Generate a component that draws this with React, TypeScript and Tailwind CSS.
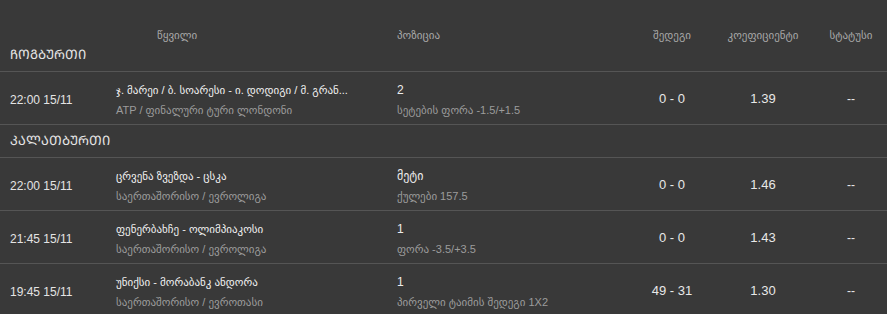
import React from "react";

type Row = {
  time: string;
  title: string;
  sub: string;
  pos: string;
  posSub: string;
  score: string;
  coef: string;
  status: string;
};

const tennis: Row[] = [
  {
    time: "22:00 15/11",
    title: "ჯ. მარეი / ბ. სოარესი - ი. დოდიგი / მ. გრან...",
    sub: "ATP / ფინალური ტური ლონდონი",
    pos: "2",
    posSub: "სეტების ფორა -1.5/+1.5",
    score: "0 - 0",
    coef: "1.39",
    status: "--",
  },
];

const basket: Row[] = [
  {
    time: "22:00 15/11",
    title: "ცრვენა ზვეზდა - ცსკა",
    sub: "საერთაშორისო / ევროლიგა",
    pos: "მეტი",
    posSub: "ქულები 157.5",
    score: "0 - 0",
    coef: "1.46",
    status: "--",
  },
  {
    time: "21:45 15/11",
    title: "ფენერბახჩე - ოლიმპიაკოსი",
    sub: "საერთაშორისო / ევროლიგა",
    pos: "1",
    posSub: "ფორა -3.5/+3.5",
    score: "0 - 0",
    coef: "1.43",
    status: "--",
  },
  {
    time: "19:45 15/11",
    title: "უნიქსი - მორაბანკ ანდორა",
    sub: "საერთაშორისო / ევროთასი",
    pos: "1",
    posSub: "პირველი ტაიმის შედეგი 1X2",
    score: "49 - 31",
    coef: "1.30",
    status: "--",
  },
];

const grid = "grid grid-cols-[116px_281px_1fr_90px_92px_78px]";

function Section({ title }: { title: string }) {
  return (
    <div className="h-[33px] flex items-center pl-[10px] border-b border-[#555555] text-[13px] text-[#e6e6e6]">
      {title}
    </div>
  );
}

function RowView({ r }: { r: Row }) {
  return (
    <div className={`${grid} h-[53px] border-b border-[#555555]`}>
      <div className="flex items-center pl-[10px] pt-[4px] text-[12px] text-[#e4e4e4]">{r.time}</div>
      <div className="flex flex-col pt-[10px] min-w-0">
        <div className="whitespace-nowrap text-[11px] leading-[16px] text-[#f0f0f0]">{r.title}</div>
        <div className="whitespace-nowrap text-[11px] leading-[16px] mt-[4px] text-[#9c9c9c]">{r.sub}</div>
      </div>
      <div className="flex flex-col pt-[10px] min-w-0">
        <div className="whitespace-nowrap text-[12px] leading-[16px] text-[#ececec]">{r.pos}</div>
        <div className="whitespace-nowrap text-[11px] leading-[16px] mt-[4px] text-[#9c9c9c]">{r.posSub}</div>
      </div>
      <div className="flex items-center justify-center pt-[1px] text-[13px] text-[#e8e8e8]">{r.score}</div>
      <div className="flex items-center justify-center pt-[1px] text-[13px] text-[#e8e8e8]">{r.coef}</div>
      <div className="flex items-center justify-center pl-[6px] pt-[1px] text-[12px] text-[#e8e8e8]">{r.status}</div>
    </div>
  );
}

export default function App() {
  return (
    <div
      className="w-[887px] h-[314px] overflow-hidden bg-[#393939]"
      style={{ fontFamily: "'Liberation Sans', 'DejaVu Sans', sans-serif" }}
    >
      <div className={`${grid} h-[39px] pt-[28px] text-[11px] leading-[14px] text-[#a8a8a8]`}>
        <div />
        <div className="pl-[41px]">წყვილი</div>
        <div>პოზიცია</div>
        <div className="text-center">შედეგი</div>
        <div className="text-center">კოეფიციენტი</div>
        <div className="text-center pl-[6px]">სტატუსი</div>
      </div>
      <Section title="ᲩᲝᲒᲑᲣᲠᲗᲘ" />
      {tennis.map((r, i) => (
        <RowView key={i} r={r} />
      ))}
      <Section title="ᲙᲐᲚᲐᲗᲑᲣᲠᲗᲘ" />
      {basket.map((r, i) => (
        <RowView key={i} r={r} />
      ))}
    </div>
  );
}
